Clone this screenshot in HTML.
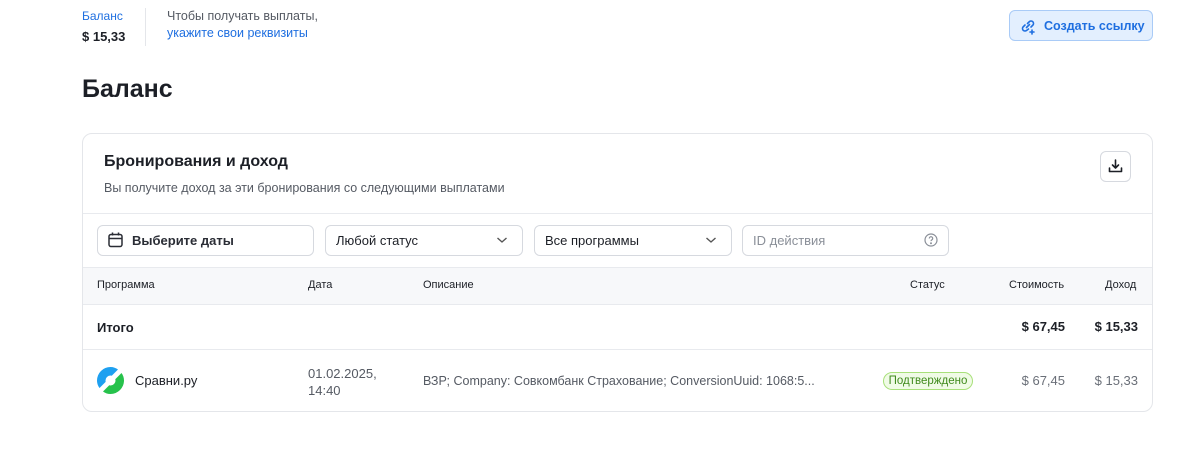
<!DOCTYPE html>
<html><head><meta charset="utf-8"><style>
*{box-sizing:border-box;margin:0;padding:0}
body{width:1200px;height:465px;background:#fff;font-family:"Liberation Sans",Arial,sans-serif;color:#1c1f26;position:relative;overflow:hidden}
.a{position:absolute;white-space:nowrap}
.blue{color:#1f6fe0}
.inp{position:absolute;top:225px;height:31px;border:1px solid #d6d9df;border-radius:6px;font-size:13px;display:flex;align-items:center;padding-left:10px}
.th{position:absolute;top:279px;font-size:11px;color:#1c1f26}
</style></head><body>
<div class="a blue" style="left:82px;top:9px;font-size:12px">Баланс</div>
<div class="a" style="left:82px;top:29px;font-size:13px;font-weight:bold">$ 15,33</div>
<div class="a" style="left:145px;top:8px;width:1px;height:38px;background:#e4e6ea"></div>
<div class="a" style="left:167px;top:9px;font-size:12.5px;color:#555a63">Чтобы получать выплаты,</div>
<div class="a blue" style="left:167px;top:26px;font-size:12.5px">укажите свои реквизиты</div>
<div class="a" style="left:1009px;top:10px;width:144px;height:31px;background:#e3effe;border:1px solid #a9cbf7;border-radius:6px;font-size:12.5px;font-weight:bold;color:#1f6fe0;padding:8px 0 0 34px">Создать ссылку</div>
<svg class="a" style="left:1019px;top:17px" width="18" height="18" viewBox="0 0 18 18" fill="none" stroke="#1f6fe0" stroke-width="1.6" stroke-linecap="round"><path d="M7.5 10.5l3-3M6 8L4 10a2.5 2.5 0 003.5 3.5L9.5 12M12 10l2-2a2.5 2.5 0 00-3.5-3.5L8.5 6.5"/><path d="M13 13v4M11 15h4"/></svg>
<div class="a" style="left:82px;top:75px;font-size:25px;font-weight:bold">Баланс</div>
<div class="a" style="left:82px;top:133px;width:1071px;height:279px;border:1px solid #e4e6ea;border-radius:10px"></div>
<div class="a" style="left:104px;top:153px;font-size:16px;font-weight:bold">Бронирования и доход</div>
<div class="a" style="left:104px;top:181px;font-size:12.5px;color:#555a63">Вы получите доход за эти бронирования со следующими выплатами</div>
<div class="a" style="left:1100px;top:151px;width:31px;height:31px;border:1px solid #d6d9df;border-radius:6px"></div>
<svg class="a" style="left:1107px;top:158px" width="17" height="17" viewBox="0 0 17 17" fill="none" stroke="#1c1f26" stroke-width="1.6" stroke-linecap="round" stroke-linejoin="round"><path d="M8.5 2v8M5.5 7l3 3 3-3M2.5 10v3.5h12V10"/></svg>
<div class="a" style="left:83px;top:213px;width:1069px;height:1px;background:#e8eaee"></div>
<div class="inp" style="left:97px;width:217px;padding-left:34px;font-weight:bold;color:#2a2d35">Выберите даты</div>
<svg class="a" style="left:107px;top:231px" width="17" height="18" viewBox="0 0 17 18" fill="none" stroke="#2a2d35" stroke-width="1.5"><rect x="2" y="3.5" width="13" height="12" rx="2"/><path d="M2 7.5h13M5.5 1.5v3M11.5 1.5v3"/></svg>
<div class="inp" style="left:325px;width:198px">Любой статус</div>
<div class="inp" style="left:534px;width:198px">Все программы</div>
<svg class="a" style="left:496px;top:235px" width="12" height="10" viewBox="0 0 12 10" fill="none" stroke="#555" stroke-width="1.4"><path d="M1.5 3l4.5 4 4.5-4"/></svg>
<svg class="a" style="left:705px;top:235px" width="12" height="10" viewBox="0 0 12 10" fill="none" stroke="#555" stroke-width="1.4"><path d="M1.5 3l4.5 4 4.5-4"/></svg>
<div class="inp" style="left:742px;width:207px;color:#8a8f98">ID действия</div>
<svg class="a" style="left:924px;top:233px" width="14" height="14" viewBox="0 0 14 14" fill="none" stroke="#8a8f98" stroke-width="1.2"><circle cx="7" cy="7" r="6"/><path d="M5.3 5.5a1.7 1.7 0 113 1c-.8.5-1.3.8-1.3 1.6"/><circle cx="7" cy="10.3" r=".4" fill="#8a8f98"/></svg>
<div class="a" style="left:83px;top:267px;width:1069px;height:38px;background:#f7f8fa;border-top:1px solid #e8eaee;border-bottom:1px solid #e8eaee"></div>
<div class="th" style="left:97px">Программа</div>
<div class="th" style="left:308px">Дата</div>
<div class="th" style="left:423px">Описание</div>
<div class="th" style="left:910px">Статус</div>
<div class="th" style="left:1009px">Стоимость</div>
<div class="th" style="left:1105px">Доход</div>
<div class="a" style="left:97px;top:320px;font-size:13px;font-weight:bold">Итого</div>
<div class="a" style="left:965px;top:319px;width:100px;text-align:right;font-size:13px;font-weight:bold">$ 67,45</div>
<div class="a" style="left:1038px;top:319px;width:100px;text-align:right;font-size:13px;font-weight:bold">$ 15,33</div>
<div class="a" style="left:83px;top:349px;width:1069px;height:1px;background:#e8eaee"></div>
<svg class="a" style="left:97px;top:367px" width="27" height="27" viewBox="0 0 27 27"><path d="M13.5 0A13.5 13.5 0 000 13.5c0 3 1 5.5 2.5 7.5L21 2.5C19 1 16.5 0 13.5 0z" fill="#1ea0f0"/><path d="M13.5 27A13.5 13.5 0 0027 13.5c0-3-1-5.5-2.5-7.5L6 24.5C8 26 10.5 27 13.5 27z" fill="#27c24c"/><circle cx="13.5" cy="13.5" r="5" fill="#fff"/></svg>
<div class="a" style="left:135px;top:373px;font-size:13px">Сравни.ру</div>
<div class="a" style="left:308px;top:365px;font-size:13px;color:#555a63;line-height:17px">01.02.2025,<br>14:40</div>
<div class="a" style="left:423px;top:374px;font-size:12.5px;color:#555a63">ВЗР; Company: Совкомбанк Страхование; ConversionUuid: 1068:5...</div>
<div class="a" style="left:883px;top:372px;width:90px;height:18px;border:1px solid #a8e07a;background:#f0fbe6;border-radius:9px;font-size:11.5px;color:#3f8a1c;text-align:center;line-height:16px">Подтверждено</div>
<div class="a" style="left:965px;top:373px;width:100px;text-align:right;font-size:13px;color:#6a6f78">$ 67,45</div>
<div class="a" style="left:1038px;top:373px;width:100px;text-align:right;font-size:13px;color:#6a6f78">$ 15,33</div>
</body></html>
